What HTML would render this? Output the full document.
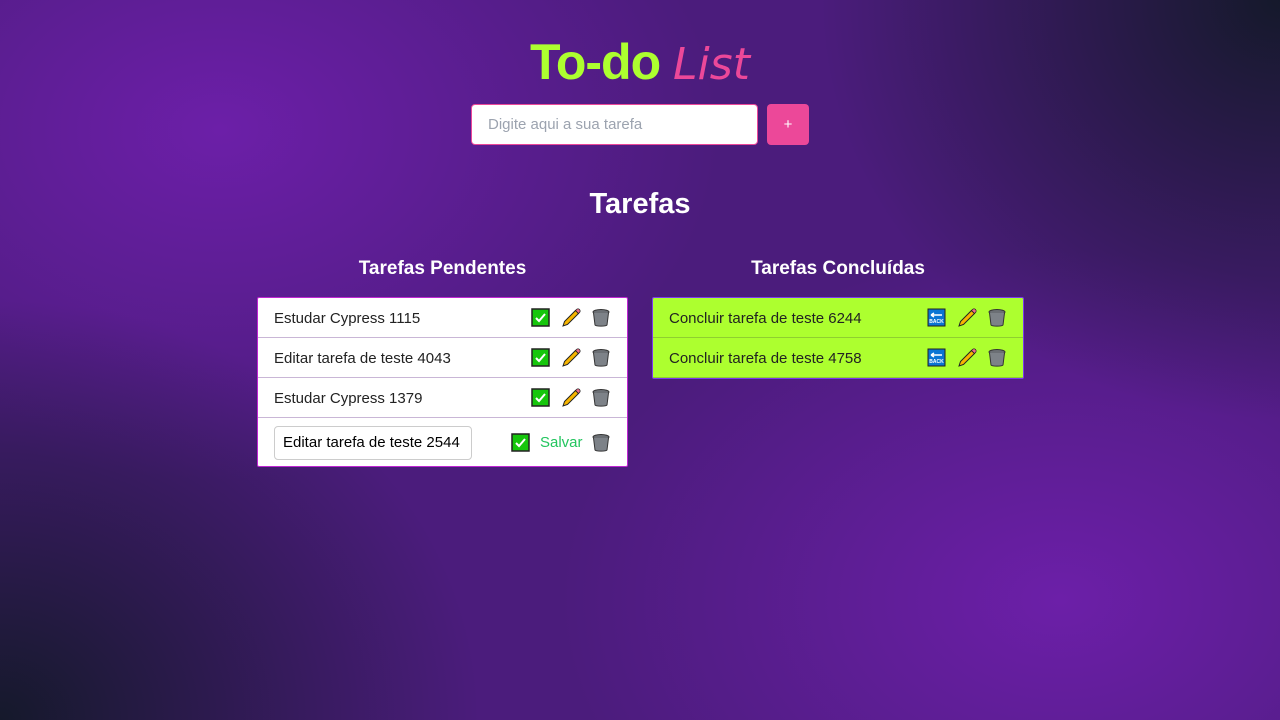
<!DOCTYPE html>
<html><head><meta charset="utf-8"><style>
*{box-sizing:border-box;margin:0;padding:0}
body{width:1280px;height:720px;overflow:hidden;font-family:"Liberation Sans","DejaVu Sans",sans-serif;
background:
radial-gradient(ellipse 460px 420px at 1280px 0px,#15192b 0%,rgba(21,25,43,0) 100%),
radial-gradient(ellipse 480px 420px at 0px 720px,#15192b 0%,rgba(21,25,43,0) 100%),
radial-gradient(ellipse 500px 350px at 220px 130px,#6c1fa8 0%,rgba(108,31,168,0) 100%),
radial-gradient(ellipse 500px 350px at 1060px 600px,#6c1fa8 0%,rgba(108,31,168,0) 100%),
#4b1c7c;position:relative}
.title{position:absolute;top:33px;left:0;width:1280px;text-align:center;font-size:50px;font-weight:bold;color:#adff2f;letter-spacing:-1px}
.title i{color:#ec4899;font-family:"DejaVu Sans",sans-serif;font-weight:200;font-style:italic;font-size:44px;letter-spacing:0}
.inp{position:absolute;left:471px;top:104px;width:287px;height:41px;background:#fff;border:1px solid #ec4899;border-radius:4px;padding-left:16px;line-height:40px;font-size:15px;color:#9ca3af}
.btn{position:absolute;left:767px;top:104px;width:42px;height:41px;background:#ec4899;border-radius:4px;color:#fff;text-align:center;line-height:41px;font-size:15px}
h2{position:absolute;top:188px;width:1280px;text-align:center;color:#fff;font-size:29px}
h3{position:absolute;top:258px;color:#fff;font-size:19px;text-align:center}
.card{position:absolute;border:1px solid #c026d3;border-radius:2px;overflow:hidden}
.row{height:40px;border-bottom:1px solid #c9b6d6;display:flex;align-items:center;padding-left:16px;padding-top:2px;font-size:15px;color:#222;position:relative}
.row:last-child{border-bottom:none}
.ic{position:absolute;top:10px}
.g .row{background:#adff2f;border-bottom:1px solid #8fcf30}
.g{border-color:#7c3aed}
</style></head><body>
<div class="title">To-do <i>List</i></div>
<div class="inp">Digite aqui a sua tarefa</div>
<div class="btn">+</div>
<h2>Tarefas</h2>
<h3 style="left:257px;width:371px">Tarefas Pendentes</h3>
<h3 style="left:652px;width:372px">Tarefas Concluídas</h3>

<svg width="0" height="0" style="position:absolute"><defs>
<g id="chk"><rect x="1" y="1" width="17" height="17" fill="#16c60c" stroke="#222" stroke-width="1.5"/><path d="M5 10l3 3 6-7" stroke="#fff" stroke-width="2" fill="none"/></g>
<g id="pen"><path d="M2 18l1.5-4.5 11-11 3 3-11 11z" fill="#f7b500" stroke="#222" stroke-width="1"/><path d="M14.5 2.5l3 3 1-1a1.4 1.4 0 0 0-3-3z" fill="#f06a8a" stroke="#222" stroke-width="0.8"/></g>
<g id="bin"><ellipse cx="10" cy="4" rx="8" ry="2.5" fill="#6b6f74" stroke="#333"/><path d="M2.5 5l1.5 12c1 1.5 11 1.5 12 0l1.5-12" fill="#7d8288" stroke="#333"/></g>
<g id="back"><rect x="1" y="1" width="17" height="17" fill="#0a74d4" stroke="#222"/><path d="M4 7h11M4 7l3-2M4 7l3 2" stroke="#fff" stroke-width="1.4" fill="none"/><text x="9.5" y="15" font-size="5" fill="#fff" text-anchor="middle" font-family="Liberation Sans" font-weight="bold">BACK</text></g>
</defs></svg>

<div class="card" style="left:257px;top:297px;width:371px;height:170px;background:#fff">
<div class="row">Estudar Cypress 1115<svg class="ic" style="left:273px" width="20" height="20"><use href="#chk"/></svg><svg class="ic" style="left:303px" width="20" height="20"><use href="#pen"/></svg><svg class="ic" style="left:333px" width="20" height="20"><use href="#bin"/></svg></div>
<div class="row">Editar tarefa de teste 4043<svg class="ic" style="left:273px" width="20" height="20"><use href="#chk"/></svg><svg class="ic" style="left:303px" width="20" height="20"><use href="#pen"/></svg><svg class="ic" style="left:333px" width="20" height="20"><use href="#bin"/></svg></div>
<div class="row">Estudar Cypress 1379<svg class="ic" style="left:273px" width="20" height="20"><use href="#chk"/></svg><svg class="ic" style="left:303px" width="20" height="20"><use href="#pen"/></svg><svg class="ic" style="left:333px" width="20" height="20"><use href="#bin"/></svg></div>
<div class="row" style="height:49px;padding-top:0"><div style="width:198px;height:34px;border:1px solid #ccc;border-radius:4px;padding-left:8px;line-height:32px;overflow:hidden;white-space:nowrap;color:#000">Editar tarefa de teste 2544</div><svg class="ic" style="left:253px;top:15px" width="20" height="20"><use href="#chk"/></svg><span style="position:absolute;left:282px;top:16px;color:#22c55e">Salvar</span><svg class="ic" style="left:333px;top:15px" width="20" height="20"><use href="#bin"/></svg></div>
</div>

<div class="card g" style="left:652px;top:297px;width:372px;height:82px">
<div class="row">Concluir tarefa de teste 6244<svg class="ic" style="left:274px" width="20" height="20"><use href="#back"/></svg><svg class="ic" style="left:304px" width="20" height="20"><use href="#pen"/></svg><svg class="ic" style="left:334px" width="20" height="20"><use href="#bin"/></svg></div>
<div class="row">Concluir tarefa de teste 4758<svg class="ic" style="left:274px" width="20" height="20"><use href="#back"/></svg><svg class="ic" style="left:304px" width="20" height="20"><use href="#pen"/></svg><svg class="ic" style="left:334px" width="20" height="20"><use href="#bin"/></svg></div>
</div>
</body></html>
